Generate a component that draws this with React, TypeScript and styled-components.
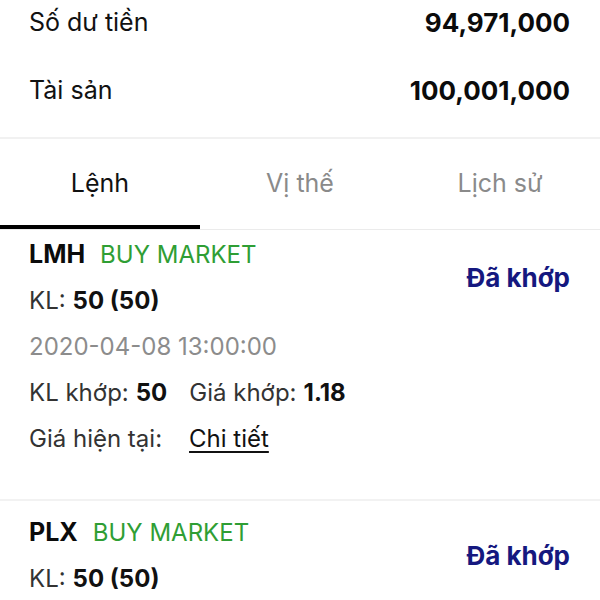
import React, { useState } from 'react';
import styled, { createGlobalStyle } from 'styled-components';

const GlobalStyle = createGlobalStyle`
  html, body {
    margin: 0;
    padding: 0;
    background: #ffffff;
  }
  body {
    font-family: Inter, "Liberation Sans", Arial, sans-serif;
    color: #111;
  }
`;

const Page = styled.div`
  width: 600px;
  height: 600px;
  overflow: hidden;
  background: #fff;
`;

const Summary = styled.div`
  display: flex;
  flex-direction: column;
  gap: 24px;
  padding: 0 30px 25px 29px;
  border-bottom: 2px solid #f1f1f1;
`;

const SummaryRow = styled.div`
  display: flex;
  align-items: center;
  justify-content: space-between;
  height: 44px;

  .label {
    font-size: 25px;
    color: #111;
  }

  .value {
    font-size: 26px;
    font-weight: 700;
    color: #0b0b0b;
  }
`;

const TabBar = styled.div`
  display: grid;
  grid-template-columns: repeat(3, 1fr);
  border-bottom: 1px solid #ebebeb;
`;

const Tab = styled.button<{ $active?: boolean }>`
  height: 90px;
  padding: 2px 0 0;
  border: none;
  background: none;
  font-family: inherit;
  font-size: 25px;
  color: ${({ $active }) => ($active ? '#111' : '#8a8a8a')};
  border-bottom: 4px solid ${({ $active }) => ($active ? '#000' : 'transparent')};
  cursor: pointer;
`;

const Card = styled.div`
  padding: 8px 30px 38px 29px;
  border-bottom: 2px solid #f2f2f2;

  &:first-child {
    padding-top: 1px;
  }
`;

const CardHead = styled.div`
  display: flex;
  align-items: center;
  justify-content: space-between;
`;

const Line = styled.div`
  height: 46px;
  display: flex;
  align-items: center;
  font-size: 24px;
  color: #333;
  white-space: nowrap;

  b {
    color: #111;
    font-weight: 700;
    margin-left: 7px;
  }
`;

const Symbol = styled.span`
  font-size: 25px;
  font-weight: 700;
  color: #0b0b0b;
  margin-right: 15px;
`;

const Side = styled.span`
  font-size: 24px;
  color: #2f9e34;
`;

const Status = styled.span`
  font-size: 26px;
  font-weight: 700;
  color: #15187f;
`;

const DateLine = styled(Line)`
  color: #8c8c8c;
`;

const Pair = styled.span`
  & + & {
    margin-left: 22px;
  }
`;

const DetailLink = styled.a`
  margin-left: 27px;
  color: #111;
  text-decoration: underline;
  text-underline-offset: 4px;
  cursor: pointer;
`;

type Order = {
  symbol: string;
  side: string;
  qty: string;
  time: string;
  matchedQty: string;
  matchedPrice: string;
  status: string;
};

const orders: Order[] = [
  {
    symbol: 'LMH',
    side: 'BUY MARKET',
    qty: '50 (50)',
    time: '2020-04-08 13:00:00',
    matchedQty: '50',
    matchedPrice: '1.18',
    status: 'Đã khớp',
  },
  {
    symbol: 'PLX',
    side: 'BUY MARKET',
    qty: '50 (50)',
    time: '2020-04-08 13:00:00',
    matchedQty: '50',
    matchedPrice: '1.18',
    status: 'Đã khớp',
  },
];

const tabs = ['Lệnh', 'Vị thế', 'Lịch sử'];

const OrderCard = ({ order }: { order: Order }) => (
  <Card>
    <CardHead>
      <div>
        <Line>
          <Symbol>{order.symbol}</Symbol>
          <Side>{order.side}</Side>
        </Line>
        <Line>
          KL:<b>{order.qty}</b>
        </Line>
      </div>
      <Status>{order.status}</Status>
    </CardHead>
    <DateLine>{order.time}</DateLine>
    <Line>
      <Pair>
        KL khớp:<b>{order.matchedQty}</b>
      </Pair>
      <Pair>
        Giá khớp:<b>{order.matchedPrice}</b>
      </Pair>
    </Line>
    <Line>
      Giá hiện tại:
      <DetailLink>Chi tiết</DetailLink>
    </Line>
  </Card>
);

export default function App() {
  const [active, setActive] = useState(0);

  return (
    <Page>
      <GlobalStyle />
      <Summary>
        <SummaryRow>
          <span className="label">Số dư tiền</span>
          <span className="value">94,971,000</span>
        </SummaryRow>
        <SummaryRow>
          <span className="label">Tài sản</span>
          <span className="value">100,001,000</span>
        </SummaryRow>
      </Summary>
      <TabBar>
        {tabs.map((t, i) => (
          <Tab key={t} $active={i === active} onClick={() => setActive(i)}>
            {t}
          </Tab>
        ))}
      </TabBar>
      <div>
        {orders.map((o) => (
          <OrderCard key={o.symbol} order={o} />
        ))}
      </div>
    </Page>
  );
}
